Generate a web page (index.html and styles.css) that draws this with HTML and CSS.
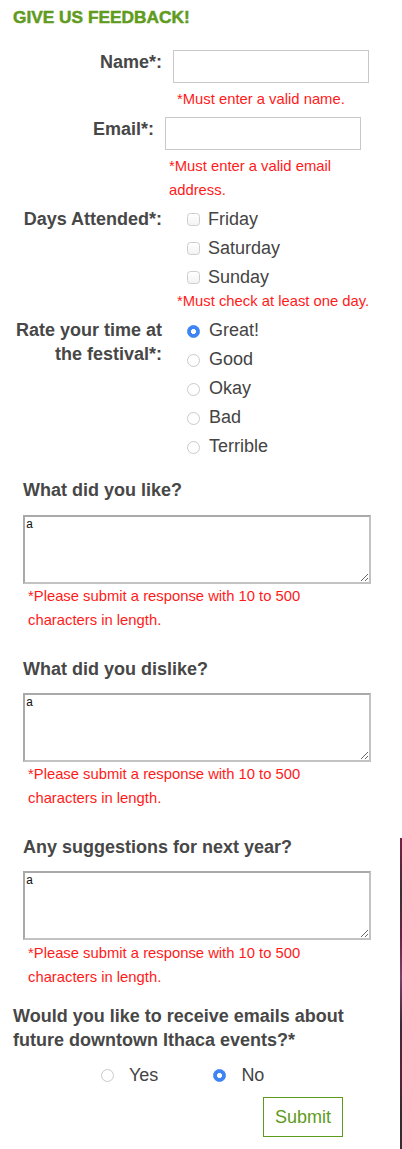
FILE: index.html
```html
<!DOCTYPE html>
<html lang="en">
<head>
<meta charset="utf-8">
<title>Give us feedback</title>
<link rel="stylesheet" href="styles.css">
</head>
<body>
<div class="page">
  <form class="feedback">
    <h1 class="title">GIVE US FEEDBACK!</h1>

    <div class="row">
      <label class="row-label" for="name">Name*:</label>
      <div class="row-field">
        <input class="text-input" type="text" id="name">
        <p class="error error--field">*Must enter a valid name.</p>
      </div>
    </div>

    <div class="row row--email">
      <label class="row-label" for="email">Email*:</label>
      <div class="row-field">
        <input class="text-input" type="text" id="email">
        <p class="error error--field">*Must enter a valid email address.</p>
      </div>
    </div>

    <div class="row row--choices">
      <span class="row-label">Days Attended*:</span>
      <div class="row-field">
        <ul class="choices">
          <li class="choice"><input class="check" type="checkbox"><span>Friday</span></li>
          <li class="choice"><input class="check" type="checkbox"><span>Saturday</span></li>
          <li class="choice"><input class="check" type="checkbox"><span>Sunday</span></li>
        </ul>
        <p class="error error--days">*Must check at least one day.</p>
      </div>
    </div>

    <div class="row row--choices">
      <span class="row-label">Rate your time at the festival*:</span>
      <div class="row-field">
        <ul class="choices">
          <li class="choice"><input class="radio" type="radio" name="rate" checked><span>Great!</span></li>
          <li class="choice"><input class="radio" type="radio" name="rate"><span>Good</span></li>
          <li class="choice"><input class="radio" type="radio" name="rate"><span>Okay</span></li>
          <li class="choice"><input class="radio" type="radio" name="rate"><span>Bad</span></li>
          <li class="choice"><input class="radio" type="radio" name="rate"><span>Terrible</span></li>
        </ul>
      </div>
    </div>

    <div class="question question--first">
      <label class="question-label" for="like">What did you like?</label>
      <textarea class="answer" id="like">a</textarea>
      <p class="error error--answer">*Please submit a response with 10 to 500 characters in length.</p>
    </div>

    <div class="question">
      <label class="question-label" for="dislike">What did you dislike?</label>
      <textarea class="answer" id="dislike">a</textarea>
      <p class="error error--answer">*Please submit a response with 10 to 500 characters in length.</p>
    </div>

    <div class="question">
      <label class="question-label" for="suggest">Any suggestions for next year?</label>
      <textarea class="answer answer--last" id="suggest">a</textarea>
      <p class="error error--answer">*Please submit a response with 10 to 500 characters in length.</p>
    </div>

    <p class="emails-question">Would you like to receive emails about future downtown Ithaca events?*</p>
    <div class="yes-no">
      <label class="yn-option"><input class="radio" type="radio" name="emails"><span>Yes</span></label>
      <label class="yn-option"><input class="radio" type="radio" name="emails" checked><span>No</span></label>
    </div>
    <div class="actions">
      <button class="submit" type="button">Submit</button>
    </div>
  </form>
  <div class="edge"></div>
</div>
</body>
</html>
```
FILE: styles.css
```css
* { box-sizing: border-box; }

html, body {
  margin: 0;
  padding: 0;
  background: #fff;
}

body {
  font-family: "Liberation Sans", Arial, Helvetica, sans-serif;
  color: #444;
}

.page {
  position: relative;
  width: 402px;
  height: 1149px;
  overflow: hidden;
}

.feedback {
  padding: 5px 13px 0 13px;
}

.title {
  margin: 0 0 21px 0;
  font-size: 17.3px;
  line-height: 24px;
  font-weight: 900;
  color: #5f9b1e;
  letter-spacing: 0;
  -webkit-text-stroke: 0.5px #5f9b1e;
}

/* label / field rows */
.row {
  display: grid;
  grid-template-columns: 149px 1fr;
  column-gap: 11px;
  align-items: start;
  margin-top: 5px;
}
.row:first-of-type { margin-top: 0; }

.row--email {
  margin-top: 6px;
  margin-left: -8px;
  margin-right: 8px;
}

.row-label {
  text-align: right;
  font-weight: bold;
  font-size: 18px;
  line-height: 24px;
  color: #474747;
}

.row-field {
  min-width: 0;
}

.text-input {
  display: block;
  width: 196px;
  height: 33px;
  margin: 0;
  border: 1px solid #c9c9c9;
  border-radius: 0;
  background: #fff;
  font: inherit;
  padding: 0 4px;
}

.error {
  margin: 0;
  color: #ff1a1a;
  font-size: 14.8px;
  line-height: 24px;
}

.error--field {
  margin-top: 4px;
  padding-left: 4px;
}

.error--days {
  padding-left: 4px;
}

/* checkbox / radio lists */
.choices {
  list-style: none;
  margin: 0;
  padding: 0 0 0 14px;
}

.choice {
  display: flex;
  align-items: center;
  height: 24px;
  margin-bottom: 5px;
  font-size: 18px;
  line-height: 24px;
  color: #444;
}
.choice:last-child { margin-bottom: 0; }

.check {
  appearance: none;
  -webkit-appearance: none;
  width: 13px;
  height: 13px;
  margin: 1px 8px 0 0;
  border: 1px solid #cdcdcd;
  border-radius: 3.5px;
  background: linear-gradient(#fff, #f3f3f3);
  flex: none;
}

.radio {
  appearance: none;
  -webkit-appearance: none;
  width: 13px;
  height: 13px;
  margin: 2px 9px 0 0;
  border: 1px solid #cacaca;
  border-radius: 50%;
  background: #fff;
  flex: none;
}

.radio:checked {
  border-color: #3f84f5;
  background: radial-gradient(circle, #fff 0 2.2px, #3f84f5 2.8px);
}

/* textarea questions */
.question {
  width: 348px;
  margin: 25px 0 0 10px;
}

.question--first { margin-top: 20px; }

.question-label {
  display: block;
  font-weight: bold;
  font-size: 18px;
  line-height: 24px;
  color: #474747;
}

.answer {
  display: block;
  width: 348px;
  height: 69px;
  margin: 12px 0 0 0;
  padding: 1px 1px;
  border: 2px solid #a9a9a9;
  border-right-color: #c2c2c2;
  border-bottom-color: #c2c2c2;
  border-radius: 0;
  font-family: "Liberation Mono", "Courier New", monospace;
  font-size: 12px;
  line-height: 14px;
  color: #111;
  background: #fff;
  resize: both;
}

.question--first .answer { margin-top: 13px; }

.error--answer {
  padding: 0 6px 0 5px;
}

.answer--last + .error--answer { margin-top: 1px; }

/* emails question */
.emails-question {
  margin: 15px 0 0 0;
  font-weight: bold;
  font-size: 18px;
  line-height: 24px;
  color: #474747;
}

.yes-no {
  display: flex;
  align-items: center;
  gap: 0;
  margin-top: 11px;
  padding-left: 88px;
  height: 24px;
}

.yn-option {
  display: flex;
  align-items: center;
  font-size: 18px;
  line-height: 24px;
  color: #444;
}

.yn-option .radio {
  margin: 0 15px 0 0;
}

.yn-option + .yn-option {
  margin-left: 55px;
}

.actions {
  display: flex;
  justify-content: flex-end;
  margin-top: 10px;
  padding-right: 46px;
}

.submit {
  width: 80px;
  height: 40px;
  margin: 0;
  padding: 0;
  border: 1px solid #5e9a1c;
  border-radius: 0;
  background: #fff;
  color: #5e9a1c;
  font-family: "Liberation Sans", Arial, Helvetica, sans-serif;
  font-size: 18px;
}

/* decorative edge of the neighbouring panel */
.edge {
  position: absolute;
  left: 400px;
  top: 838px;
  width: 2px;
  height: 311px;
  background: linear-gradient(#7b1f44 0%, #3a3034 18%, #6a2244 32%, #7a4068 45%, #3e2838 60%, #5a2238 75%, #2f2d2c 90%, #3a2a30 100%);
}
```
